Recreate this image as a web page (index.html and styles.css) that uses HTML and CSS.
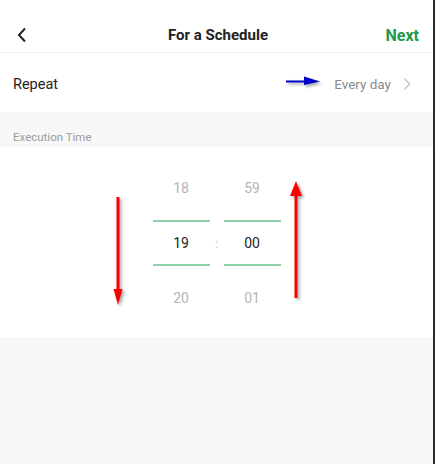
FILE: index.html
```html
<!DOCTYPE html>
<html lang="en">
<head>
    <meta charset="UTF-8">
    <meta name="viewport" content="width=device-width, initial-scale=1.0">
    <title>For a Schedule</title>
    <link rel="stylesheet" href="styles.css">
</head>
<body>

<div class="screen">
    <div class="header">
        <span class="back">
            <svg width="10" height="16" viewBox="0 0 10 16"><path d="M8 1.5 L2 8 L8 14.5" fill="none" stroke="#222" stroke-width="2"/></svg>
        </span>
        <h2 class="title">For a Schedule</h2>
        <span class="next">Next</span>
    </div>

    <div class="row">
        <span class="row-label">Repeat</span>
        <span class="row-value">Every day
            <svg width="8" height="14" viewBox="0 0 8 14"><path d="M1.5 1.5 L6.5 7 L1.5 12.5" fill="none" stroke="#c8c8c8" stroke-width="1.5"/></svg>
        </span>
        <!-- annotation arrow -->
        <svg class="note note-blue" width="44" height="16" viewBox="0 0 44 16">
            <path d="M2 6.5 H20 V2.5 L36 7.5 L20 11 V8.5 H2 Z" fill="#0000c8"/>
        </svg>
    </div>

    <div class="section-title">Execution Time</div>

    <div class="picker">
        <div class="column">
            <div class="item">18</div>
            <div class="item selected">19</div>
            <div class="item">20</div>
        </div>
        <div class="colon">:</div>
        <div class="column">
            <div class="item">59</div>
            <div class="item selected">00</div>
            <div class="item">01</div>
        </div>

        <svg class="note note-down" width="20" height="116" viewBox="0 0 20 116">
            <path d="M6.5 2 H9.5 V94 H12.5 L8 110 L3.5 94 H6.5 Z" fill="#ff0000"/>
        </svg>
        <svg class="note note-up" width="20" height="124" viewBox="0 0 20 124">
            <path d="M8 2 L14 17 H9.5 V119 H6.5 V17 H2 Z" fill="#ff0000"/>
        </svg>
    </div>

    <div class="footer"></div>
</div>

</body>
</html>
```

FILE: styles.css
```css
body {
    font-family: Roboto, "Liberation Sans", Arial, sans-serif;
    margin: 0;
    background-color: #f7f7f7;
}

.screen {
    width: 433px;
    height: 464px;
    border-right: 2px solid #2a2a2a;
    background-color: #f7f7f7;
}

.header {
    height: 34px;
    background-color: #fff;
    border-bottom: 1px solid #efefef;
    display: flex;
    align-items: center;
    justify-content: space-between;
    padding: 18px 14px 0 17px;
}

.back {
    width: 60px;
    display: flex;
    align-items: center;
}

.title {
    margin: 0;
    font-size: 15px;
    font-weight: bold;
    color: #222;
}

.next {
    width: 60px;
    text-align: right;
    font-size: 16px;
    font-weight: bold;
    color: #1f9a4c;
}

.row {
    position: relative;
    height: 56px;
    background-color: #fff;
    display: flex;
    align-items: center;
    justify-content: space-between;
    padding: 3px 22px 0 13px;
}

.row-label {
    font-size: 14.5px;
    color: #222;
}

.row-value {
    display: flex;
    align-items: center;
    gap: 12px;
    font-size: 13.5px;
    color: #8a8a8a;
}

.section-title {
    height: 35px;
    padding: 0 13px 3px;
    display: flex;
    align-items: flex-end;
    box-sizing: border-box;
    font-size: 11.5px;
    color: #9a9a9a;
}

.picker {
    position: relative;
    background-color: #fff;
    display: flex;
    justify-content: center;
    padding: 19px 0 17px;
    height: 154px;
}

.column {
    width: 57px;
    display: flex;
    flex-direction: column;
    gap: 9px;
}

.item {
    height: 45px;
    display: flex;
    align-items: center;
    justify-content: center;
    font-size: 14px;
    color: #b4b4b4;
    box-sizing: border-box;
}

.item.selected {
    height: 47px;
    color: #222;
    border-top: 2px solid #8bd1aa;
    border-bottom: 2px solid #8bd1aa;
}

.colon {
    width: 14px;
    display: flex;
    align-items: center;
    justify-content: center;
    font-size: 13px;
    color: #c4c4c4;
}

.note {
    position: absolute;
    filter: drop-shadow(2px 2px 1.5px rgba(0, 0, 0, 0.35));
}

.note-blue {
    left: 284px;
    top: 21px;
}

.note-down {
    left: 110px;
    top: 48px;
}

.note-up {
    left: 288px;
    top: 32px;
}
```
